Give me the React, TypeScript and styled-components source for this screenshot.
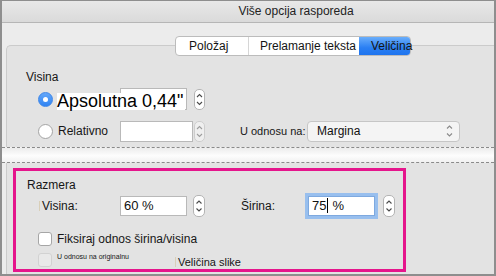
import * as React from 'react'
import styled, { createGlobalStyle } from 'styled-components'

const GlobalStyle = createGlobalStyle`
  html, body {
    margin: 0;
    padding: 0;
    background: #ececec;
  }
  body {
    font-family: 'Liberation Sans', Arial, sans-serif;
    color: #161616;
  }
  * {
    box-sizing: border-box;
  }
`

const SWindow = styled.div`
  width: 496px;
  height: 276px;
  display: flex;
  flex-direction: column;
  border: 2px solid #8e8e8e;
  border-top-width: 1px;
  background: #ececec;
  overflow: hidden;
`
const STitleBar = styled.div`
  height: 22px;
  flex: none;
  border-bottom: 1px solid #b6b6b6;
  background: linear-gradient(#e8e8e8, #dadada);
  padding-left: 96px;
  font-size: 12px;
  line-height: 21px;
  text-align: center;
  color: #222;
`
const STabs = styled.div`
  position: relative;
  z-index: 1;
  display: flex;
  align-self: flex-start;
  height: 20px;
  margin: 13px 0 -11px 173px;
  border: 1px solid #bcbcbc;
  border-radius: 4px;
  background: #fff;
`
const STab = styled.div<{ $active?: boolean; $width: number; $pad: number; $sep?: boolean }>`
  width: ${p => p.$width}px;
  padding-left: ${p => p.$pad}px;
  font-size: 12px;
  line-height: 19px;
  white-space: nowrap;
  color: #141414;
  border-right: ${p => (p.$sep ? '1px solid #d6d6d6' : 'none')};
  background: ${p =>
    p.$active ? 'linear-gradient(#6aaefb, #2a7ff3 60%, #1f74ee)' : 'transparent'};
  border-radius: ${p => (p.$active ? '0 3px 3px 0' : '0')};
`
const STopPanel = styled.div`
  margin-left: 4px;
  border-top: 1px solid #cbcbcb;
  border-left: 1px solid #cbcbcb;
  border-top-left-radius: 5px;
  background: #e3e3e3;
  padding: 23px 0 5px 19px;
`
const SGroupLabel = styled.div`
  font-size: 12px;
  line-height: 16px;
`
const SRow = styled.div<{ $top: number; $indent: number }>`
  display: flex;
  align-items: center;
  height: 22px;
  margin-top: ${p => p.$top}px;
  padding-left: ${p => p.$indent}px;
`
const SRadio = styled.div<{ $on?: boolean }>`
  flex: none;
  width: 15px;
  height: 15px;
  border-radius: 50%;
  display: flex;
  align-items: center;
  justify-content: center;
  border: 1px solid ${p => (p.$on ? '#3d86e8' : '#a4a4a4')};
  background: ${p => (p.$on ? 'linear-gradient(#64a8fa, #2f83f2)' : '#fff')};
  &::after {
    content: '';
    display: ${p => (p.$on ? 'block' : 'none')};
    width: 5px;
    height: 5px;
    border-radius: 50%;
    background: #fff;
  }
`
const SOverlay = styled.div`
  display: grid;
  width: 130px;
  height: 22px;
  margin-left: 4px;
`
const SBigLabel = styled.span`
  grid-area: 1 / 1;
  justify-self: start;
  align-self: end;
  position: relative;
  z-index: 1;
  height: 17px;
  padding-right: 2px;
  font-size: 18px;
  line-height: 17px;
  background: #fff;
  color: #000;
  white-space: nowrap;
`
const SInput = styled.div<{ $width: number; $height: number }>`
  flex: none;
  width: ${p => p.$width}px;
  height: ${p => p.$height}px;
  border: 1px solid #b9b9b9;
  background: #fff;
  padding-left: 3px;
  font-size: 13px;
  line-height: ${p => p.$height - 2}px;
  white-space: nowrap;
  color: #111;
`
const SOverlayInput = styled(SInput)`
  grid-area: 1 / 1;
  justify-self: end;
`
const SFocusInput = styled(SInput)`
  margin-left: 3px;
  border-color: #7ea9df;
  box-shadow: 0 0 0 3px #98bfee;
`
const SCaret = styled.span`
  display: inline-block;
  width: 1px;
  height: 15px;
  margin: 0 4px 0 1px;
  vertical-align: -3px;
  background: #000;
`
const STick = styled.span`
  display: inline-block;
  width: 1px;
  height: 10px;
  margin-right: 2px;
  vertical-align: -1px;
  background: #d9cfb8;
`
const SStepper = styled.div<{ $ml: number; $w: number; $h: number; $off?: boolean }>`
  flex: none;
  width: ${p => p.$w}px;
  height: ${p => p.$h}px;
  margin-left: ${p => p.$ml}px;
  border: 1px solid #b4b4b4;
  border-radius: 5px;
  background: #fff;
  opacity: ${p => (p.$off ? 0.45 : 1)};
  display: flex;
  svg {
    display: block;
  }
`
const SText = styled.span<{ $ml?: number; $width?: number; $size?: number }>`
  flex: none;
  margin-left: ${p => p.$ml || 0}px;
  width: ${p => (p.$width ? `${p.$width}px` : 'auto')};
  font-size: ${p => p.$size || 12}px;
  white-space: nowrap;
`
const SSelect = styled.div`
  flex: none;
  display: flex;
  align-items: center;
  justify-content: space-between;
  width: 153px;
  height: 21px;
  padding: 0 5px 0 9px;
  border: 1px solid #c6c6c6;
  border-radius: 4px;
  background: #f4f4f4;
  font-size: 12px;
  color: #111;
`
const STear = styled.div`
  flex: none;
  height: 16px;
  border-top: 1px dashed #8a8a8a;
  border-bottom: 1px dashed #8a8a8a;
  background: linear-gradient(#ececec, #fdfdfd 55%, #f1f1f1);
`
const SBottomPanel = styled.div`
  flex: 1;
  margin-left: 4px;
  border-left: 1px solid #cbcbcb;
  background: #e3e3e3;
  padding: 5px 0 0 6px;
`
const SHighlight = styled.div`
  width: 393px;
  height: 104px;
  border: 3px solid #e5168c;
  padding: 6px 0 0 11px;
`
const SCheckRow = styled.div<{ $top: number }>`
  display: flex;
  align-items: flex-start;
  margin-top: ${p => p.$top}px;
  padding-left: 11px;
`
const SCheckbox = styled.div<{ $off?: boolean }>`
  flex: none;
  width: 14px;
  height: 14px;
  border-radius: 3px;
  border: 1px solid ${p => (p.$off ? '#d2d2d2' : '#a6a6a6')};
  background: ${p => (p.$off ? '#e9e9e9' : '#fff')};
`
const SCheckText = styled.span<{ $size: number; $ml: number; $width?: number; $top?: number }>`
  flex: none;
  margin-left: ${p => p.$ml}px;
  margin-top: ${p => p.$top || 0}px;
  width: ${p => (p.$width ? `${p.$width}px` : 'auto')};
  font-size: ${p => p.$size}px;
  line-height: 14px;
  white-space: nowrap;
`

const Chevrons = ({ w, h, color }: { w: number; h: number; color: string }) => {
  const cx = w / 2
  return (
    <svg width={w} height={h} viewBox={`0 0 ${w} ${h}`}>
      <path
        d={`M${cx - 2.5} ${h / 2 - 2.5} L${cx} ${h / 2 - 5} L${cx + 2.5} ${h / 2 - 2.5}`}
        fill="none"
        stroke={color}
        strokeWidth="1.1"
      />
      <path
        d={`M${cx - 2.5} ${h / 2 + 2.5} L${cx} ${h / 2 + 5} L${cx + 2.5} ${h / 2 + 2.5}`}
        fill="none"
        stroke={color}
        strokeWidth="1.1"
      />
    </svg>
  )
}

const Stepper = (props: { ml: number; w: number; h: number; off?: boolean }) => (
  <SStepper $ml={props.ml} $w={props.w} $h={props.h} $off={props.off}>
    <Chevrons w={props.w - 2} h={props.h - 2} color="#4a4a4a" />
  </SStepper>
)

const App = () => {
  return (
    <>
      <GlobalStyle />
      <SWindow>
        <STitleBar>Više opcija rasporeda</STitleBar>
        <STabs>
          <STab $width={73} $pad={13} $sep>
            Položaj
          </STab>
          <STab $width={110} $pad={11}>
            Prelamanje teksta
          </STab>
          <STab $width={51} $pad={12} $active>
            Veličina
          </STab>
        </STabs>

        <STopPanel>
          <SGroupLabel>Visina</SGroupLabel>
          <SRow $top={3} $indent={12}>
            <SRadio $on />
            <SOverlay>
              <SOverlayInput $width={67} $height={22} />
              <SBigLabel>Apsolutna 0,44"</SBigLabel>
            </SOverlay>
            <Stepper ml={7} w={11} h={21} />
          </SRow>
          <SRow $top={10} $indent={12}>
            <SRadio />
            <SText $ml={5} $width={62}>
              Relativno
            </SText>
            <SInput $width={73} $height={21} />
            <Stepper ml={1} w={11} h={21} off />
            <SText $ml={35} $width={67} $size={11}>
              U odnosu na:
            </SText>
            <SSelect>
              Margina
              <Chevrons w={9} h={14} color="#8a8a8a" />
            </SSelect>
          </SRow>
        </STopPanel>

        <STear />

        <SBottomPanel>
          <SHighlight>
            <SGroupLabel>Razmera</SGroupLabel>
            <SRow $top={2} $indent={12}>
              <SText $width={81}>
                <STick />
                Visina:
              </SText>
              <SInput $width={67} $height={20}>
                60 %
              </SInput>
              <Stepper ml={6} w={12} h={22} />
              <SText $ml={36} $width={64}>
                Širina:
              </SText>
              <SFocusInput $width={67} $height={20}>
                75
                <SCaret />%
              </SFocusInput>
              <Stepper ml={8} w={12} h={22} />
            </SRow>
            <SCheckRow $top={15}>
              <SCheckbox />
              <SCheckText $size={12} $ml={5}>
                Fiksiraj odnos širina/visina
              </SCheckText>
            </SCheckRow>
            <SCheckRow $top={7}>
              <SCheckbox $off />
              <SCheckText $size={7} $ml={5} $width={118} $top={-3}>
                U odnosu na originalnu
              </SCheckText>
              <SCheckText $size={11} $ml={0} $top={2}>
                <STick />
                Veličina slike
              </SCheckText>
            </SCheckRow>
          </SHighlight>
        </SBottomPanel>
      </SWindow>
    </>
  )
}

export default App
